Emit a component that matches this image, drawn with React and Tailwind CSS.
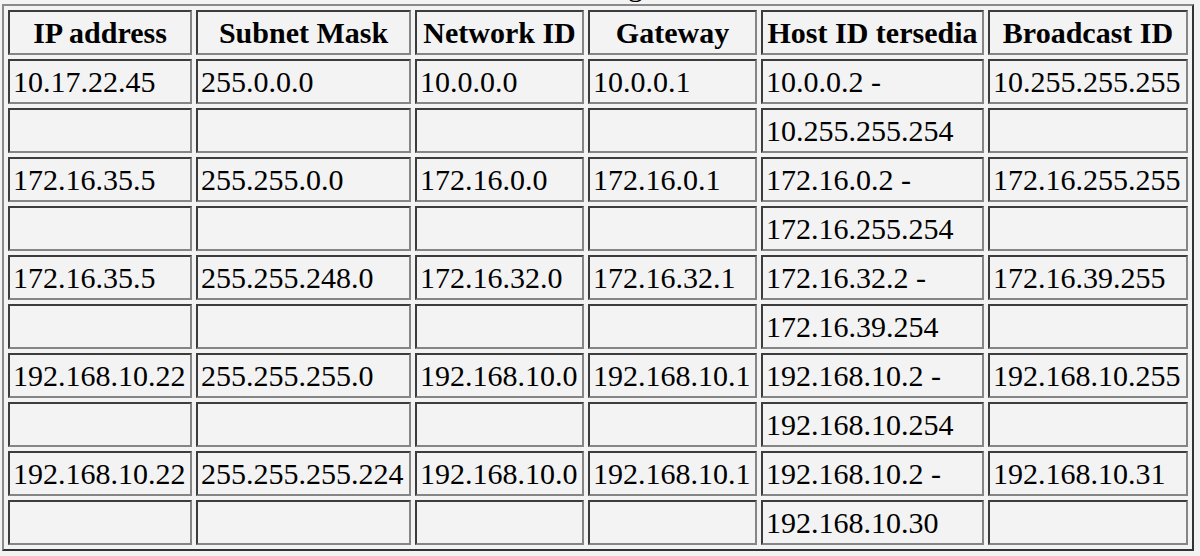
import React from "react";

const cols = ["w-[184px]", "w-[215px]", "w-[169px]", "w-[169px]", "w-[223px]", "w-[200px]"];

const headers = ["IP address", "Subnet Mask", "Network ID", "Gateway", "Host ID tersedia", "Broadcast ID"];

const rows = [
  ["10.17.22.45", "255.0.0.0", "10.0.0.0", "10.0.0.1", "10.0.0.2 -", "10.255.255.255"],
  ["", "", "", "", "10.255.255.254", ""],
  ["172.16.35.5", "255.255.0.0", "172.16.0.0", "172.16.0.1", "172.16.0.2 -", "172.16.255.255"],
  ["", "", "", "", "172.16.255.254", ""],
  ["172.16.35.5", "255.255.248.0", "172.16.32.0", "172.16.32.1", "172.16.32.2 -", "172.16.39.255"],
  ["", "", "", "", "172.16.39.254", ""],
  ["192.168.10.22", "255.255.255.0", "192.168.10.0", "192.168.10.1", "192.168.10.2 -", "192.168.10.255"],
  ["", "", "", "", "192.168.10.254", ""],
  ["192.168.10.22", "255.255.255.224", "192.168.10.0", "192.168.10.1", "192.168.10.2 -", "192.168.10.31"],
  ["", "", "", "", "192.168.10.30", ""],
];

const cellBase =
  "h-[45px] flex items-center whitespace-nowrap border-2 border-t-[#3c3c3c] border-l-[#3c3c3c] border-b-[#858585] border-r-[#858585] bg-[#f3f3f3]";

export default function App() {
  return (
    <div
      className="w-[1200px] h-[556px] bg-[#f3f3f3] text-black overflow-hidden"
      style={{ fontFamily: '"Liberation Serif", "Times New Roman", serif' }}
    >
      <div className="h-[4px] overflow-hidden">
        <div className="mt-[-31px] pl-[628px] text-[30px] leading-[33px]">g</div>
      </div>
      <div className="ml-[2px] w-[1192px] border-2 border-t-[#8a8a8a] border-l-[#8a8a8a] border-b-[#333333] border-r-[#333333] p-[4px]">
        <div className="grid grid-cols-[184px_215px_169px_169px_223px_200px] auto-rows-[45px] gap-[4px] text-[30px] leading-[33px]">
          {headers.map((h, i) => (
            <div key={"h" + i} className={cellBase + " justify-center font-bold"}>
              {h}
            </div>
          ))}
          {rows.map((r, ri) =>
            r.map((c, ci) => (
              <div key={ri + "-" + ci} className={cellBase + " pl-[3px]"}>
                {c}
              </div>
            ))
          )}
        </div>
      </div>
    </div>
  );
}
